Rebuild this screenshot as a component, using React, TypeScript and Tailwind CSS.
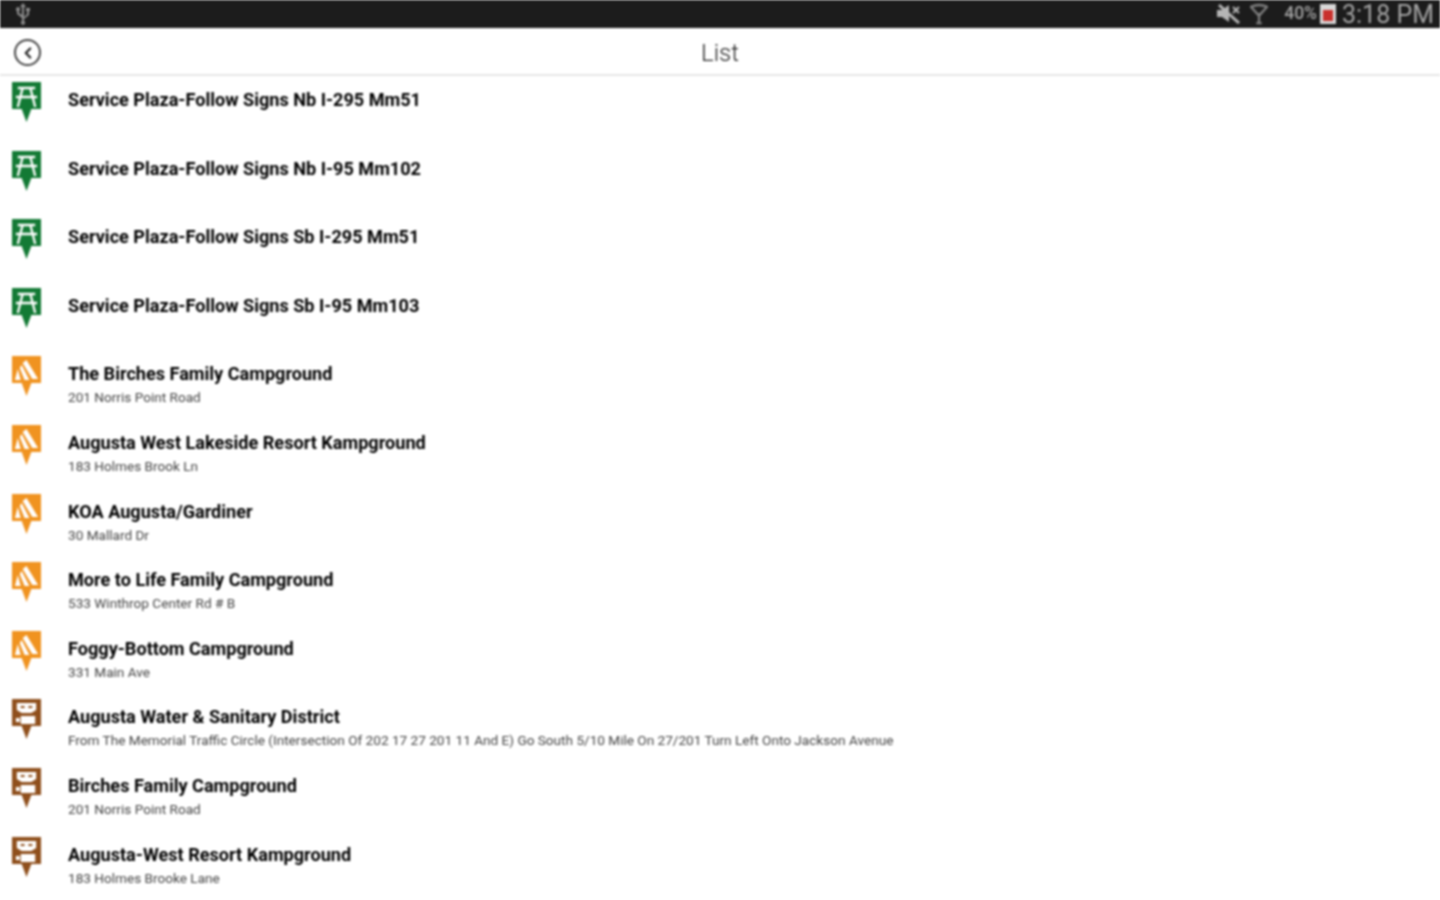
import { ChevronLeft } from "lucide-react";

type Kind = "rest" | "camp" | "water";

type Place = { kind: Kind; title: string; sub?: string };

const places: Place[] = [
  { kind: "rest", title: "Service Plaza-Follow Signs Nb I-295 Mm51" },
  { kind: "rest", title: "Service Plaza-Follow Signs Nb I-95 Mm102" },
  { kind: "rest", title: "Service Plaza-Follow Signs Sb I-295 Mm51" },
  { kind: "rest", title: "Service Plaza-Follow Signs Sb I-95 Mm103" },
  { kind: "camp", title: "The Birches Family Campground", sub: "201 Norris Point Road" },
  { kind: "camp", title: "Augusta West Lakeside Resort Kampground", sub: "183 Holmes Brook Ln" },
  { kind: "camp", title: "KOA Augusta/Gardiner", sub: "30 Mallard Dr" },
  { kind: "camp", title: "More to Life Family Campground", sub: "533 Winthrop Center Rd # B" },
  { kind: "camp", title: "Foggy-Bottom Campground", sub: "331 Main Ave" },
  {
    kind: "water",
    title: "Augusta Water & Sanitary District",
    sub: "From The Memorial Traffic Circle (Intersection Of 202 17 27 201 11 And E) Go South 5/10 Mile On 27/201 Turn Left Onto Jackson Avenue",
  },
  { kind: "water", title: "Birches Family Campground", sub: "201 Norris Point Road" },
  { kind: "water", title: "Augusta-West Resort Kampground", sub: "183 Holmes Brooke Lane" },
];

const pinColor: Record<Kind, string> = {
  rest: "#137a35",
  camp: "#f09320",
  water: "#8f4f1c",
};

function Pin({ kind }: { kind: Kind }) {
  return (
    <svg width="29" height="40" viewBox="0 0 30 40" preserveAspectRatio="none" className="shrink-0">
      <path d="M0 0H30V27H20L15 40L10 27H0Z" fill={pinColor[kind]} />
      {kind === "rest" && (
        <g stroke="#fff" strokeWidth="2.4" fill="none">
          <path d="M6 6H24M4 15H26M11 6L6 25M19 6L24 25" />
        </g>
      )}
      {kind === "camp" && (
        <g fill="#fff">
          <path d="M15 4L27 23H21L11 7Z" />
          <path d="M10 9L18 24H13L8 12Z" />
          <path d="M6 13L9 24H3Z" />
        </g>
      )}
      {kind === "water" && (
        <g fill="#fff">
          <path d="M5 4H25V11L20 14H10L5 11ZM9 7V9H13V7ZM17 7V9H21V7Z" fillRule="evenodd" />
          <path d="M9 17H24V25H9Z" />
          <path d="M4 19H8V23H4Z" />
        </g>
      )}
    </svg>
  );
}

export default function App() {
  return (
    <div className="h-[900px] w-[1440px] overflow-hidden bg-white font-['Roboto',sans-serif] blur-[0.8px]">
      {/* status bar */}
      <div className="flex h-7 items-center justify-between bg-[#1c1c1c] pl-[14px] pr-[6px]">
        <svg width="18" height="22" viewBox="0 0 18 22" fill="#8c8c8c">
          <path d="M9 0L12 4H10V14L13 11V8H12V5H16V8H15V12L10 16V18A2 2 0 1 1 8 18V15L3 11V8A2 2 0 1 1 5 8V10L8 12V4H6Z" />
        </svg>
        <div className="flex items-center text-[#a3a3a3]">
          <svg width="24" height="20" viewBox="0 0 24 20" fill="#b5b5b5" className="mr-[10px]">
            <path d="M1 6H6L13 1V18L6 13H1Z" />
            <path d="M3 1L23 19" stroke="#b5b5b5" strokeWidth="3" />
            <path d="M17 3L23 9M23 3L17 9" stroke="#b5b5b5" strokeWidth="2" />
          </svg>
          <svg width="18" height="22" viewBox="0 0 20 22" fill="none" stroke="#7f7f7f" strokeWidth="2.5" className="mr-[16px]">
            <path d="M1 3Q10 -1 19 3L10 13Z" />
            <path d="M10 10V21M7 21H13" />
          </svg>
          <span className="text-[17.5px] font-medium leading-none">40%</span>
          <div className="relative ml-[3px] h-[20px] w-[16px] bg-[#d8d8d8]">
            <div className="absolute inset-x-[3px] bottom-[3px] top-[6px] bg-[#c9302c]" />
          </div>
          <span className="ml-[6px] text-[25px] leading-none">3:18 PM</span>
        </div>
      </div>

      {/* title bar */}
      <div className="relative flex h-[48px] items-center justify-center border-b-2 border-[#e6e6e6] bg-white pt-[3px]">
        <div className="absolute left-[14px] top-[11px] flex h-[27px] w-[27px] items-center justify-center rounded-full border-2 border-[#444]">
          <ChevronLeft size={18} strokeWidth={3} color="#222" />
        </div>
        <span className="text-[24px] font-light leading-none text-[#222]">List</span>
      </div>

      {/* rows */}
      <div>
        {places.map((p, i) => (
          <div key={i} className="flex h-[68.6px] items-start pl-[12px] pt-[6px]">
            <Pin kind={p.kind} />
            <div className="ml-[27px] min-w-0 pt-[6px]">
              <div className="whitespace-nowrap text-[18.1px] font-bold leading-[24px] text-black">{p.title}</div>
              {p.sub && <div className="whitespace-nowrap pt-[3px] text-[13.6px] leading-[16px] text-[#444]">{p.sub}</div>}
            </div>
          </div>
        ))}
      </div>
    </div>
  );
}
